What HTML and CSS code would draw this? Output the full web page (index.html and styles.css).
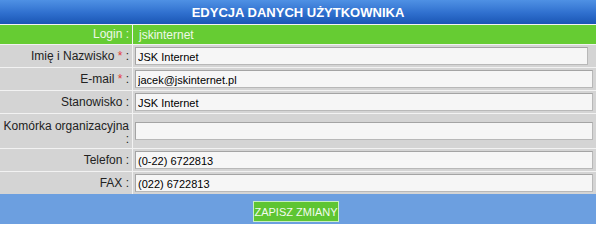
FILE: index.html
```html
<!DOCTYPE html>
<html lang="pl">
<head>
<meta charset="utf-8">
<title>Edycja danych użytkownika</title>
<link rel="stylesheet" href="styles.css">
</head>
<body>
<form class="form">
  <div class="title">EDYCJA DANYCH UŻYTKOWNIKA</div>

  <div class="label login"><span>Login :</span></div>
  <div class="value login">jskinternet</div>

  <div class="label"><span>Imię i Nazwisko <span class="req">*</span> :</span></div>
  <div class="value"><input class="field short" type="text" value="JSK Internet"></div>

  <div class="label"><span>E-mail <span class="req">*</span> :</span></div>
  <div class="value"><input class="field" type="text" value="jacek@jskinternet.pl"></div>

  <div class="label"><span>Stanowisko :</span></div>
  <div class="value"><input class="field" type="text" value="JSK Internet"></div>

  <div class="label tall"><span>Komórka organizacyjna<br>:</span></div>
  <div class="value tall"><input class="field" type="text" value=""></div>

  <div class="label"><span>Telefon :</span></div>
  <div class="value"><input class="field" type="text" value="(0-22) 6722813"></div>

  <div class="label"><span>FAX :</span></div>
  <div class="value"><input class="field" type="text" value="(022) 6722813"></div>

  <div class="footer"><button class="save" type="button">ZAPISZ ZMIANY</button></div>
</form>
</body>
</html>
```
FILE: styles.css
```css
html, body {
  margin: 0;
  padding: 0;
  background: #ffffff;
}

.form {
  width: 596px;
  display: grid;
  grid-template-columns: 132px 1fr;
  grid-template-rows: 24px 19px 22px 22px 22px 34px 22px 22px 29px;
  column-gap: 1px;
  row-gap: 1px;
  background: #f2f2f2;
  font-family: "Liberation Sans", Arial, sans-serif;
  font-size: 12px;
  color: #222222;
}

.title {
  grid-column: 1 / 3;
  background: linear-gradient(#4f91e4, #2f6fce 55%, #1a56b4);
  color: #ffffff;
  font-weight: bold;
  font-size: 13px;
  display: flex;
  align-items: center;
  justify-content: center;
  padding-top: 1px;
}

.label {
  background: #d4d4d4;
  display: flex;
  align-items: center;
  justify-content: flex-end;
  text-align: right;
  padding: 0 3px 0 0;
  line-height: 13px;
  white-space: nowrap;
}

.value {
  background: #d4d4d4;
  display: flex;
  align-items: center;
  padding: 0 3px 0 2px;
}

.login {
  background: #66cc33;
  color: #eef8e8;
}

.value.login {
  padding-left: 6px;
}

.label.tall {
  padding-top: 3px;
}

.req {
  color: #e23a3a;
}

.field {
  box-sizing: border-box;
  width: 100%;
  height: 18px;
  margin: 0;
  padding: 1px 2px 0;
  border: 1px solid #a4a4a4;
  border-bottom-color: #b8b8b8;
  border-right-color: #b8b8b8;
  background: #f6f6f6;
  font-family: "Liberation Sans", Arial, sans-serif;
  font-size: 11px;
  color: #000000;
  outline: none;
}

.field.short {
  width: calc(100% - 5px);
}

.footer {
  grid-column: 1 / 3;
  background: #6c9fe0;
  display: flex;
  justify-content: center;
  align-items: flex-start;
  padding-top: 7px;
  padding-right: 4px;
  margin-top: -1px;
}

.save {
  box-sizing: border-box;
  width: 86px;
  height: 21px;
  margin: 0;
  padding: 0;
  border: 1px solid #c8f0c0;
  background: #5ec532;
  color: #f2fbee;
  font-family: "Liberation Sans", Arial, sans-serif;
  font-size: 11px;
}
```
